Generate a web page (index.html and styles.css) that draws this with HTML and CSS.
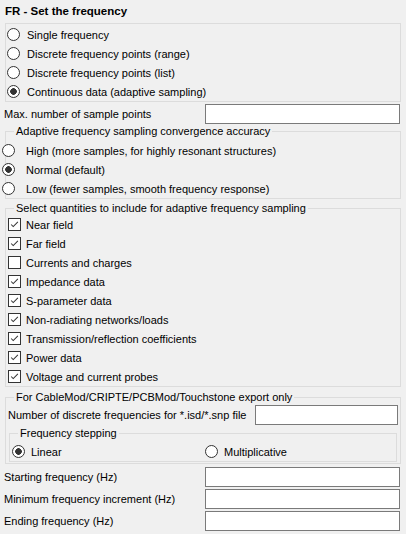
FILE: index.html
```html
<!DOCTYPE html>
<html>
<head>
<meta charset="utf-8">
<title>FR - Set the frequency</title>
<link rel="stylesheet" href="styles.css">
</head>
<body>
<div class="title">FR - Set the frequency</div>

<div class="group first">
  <label class="opt"><span class="radio"></span>Single frequency</label>
  <label class="opt"><span class="radio"></span>Discrete frequency points (range)</label>
  <label class="opt"><span class="radio"></span>Discrete frequency points (list)</label>
  <label class="opt"><span class="radio on"></span>Continuous data (adaptive sampling)</label>
</div>

<div class="field-row">
  <span>Max. number of sample points</span>
  <span class="box"></span>
</div>

<fieldset class="group accuracy">
  <legend>Adaptive frequency sampling convergence accuracy</legend>
  <label class="opt"><span class="radio"></span>High (more samples, for highly resonant structures)</label>
  <label class="opt"><span class="radio on"></span>Normal (default)</label>
  <label class="opt"><span class="radio"></span>Low (fewer samples, smooth frequency response)</label>
</fieldset>

<fieldset class="group quantities">
  <legend>Select quantities to include for adaptive frequency sampling</legend>
  <label class="opt"><span class="check on"><svg viewBox="0 0 13 13"><path d="M2.5 6.5 L5 9 L10.5 3.5" /></svg></span>Near field</label>
  <label class="opt"><span class="check on"><svg viewBox="0 0 13 13"><path d="M2.5 6.5 L5 9 L10.5 3.5" /></svg></span>Far field</label>
  <label class="opt"><span class="check"></span>Currents and charges</label>
  <label class="opt"><span class="check on"><svg viewBox="0 0 13 13"><path d="M2.5 6.5 L5 9 L10.5 3.5" /></svg></span>Impedance data</label>
  <label class="opt"><span class="check on"><svg viewBox="0 0 13 13"><path d="M2.5 6.5 L5 9 L10.5 3.5" /></svg></span>S-parameter data</label>
  <label class="opt"><span class="check on"><svg viewBox="0 0 13 13"><path d="M2.5 6.5 L5 9 L10.5 3.5" /></svg></span>Non-radiating networks/loads</label>
  <label class="opt"><span class="check on"><svg viewBox="0 0 13 13"><path d="M2.5 6.5 L5 9 L10.5 3.5" /></svg></span>Transmission/reflection coefficients</label>
  <label class="opt"><span class="check on"><svg viewBox="0 0 13 13"><path d="M2.5 6.5 L5 9 L10.5 3.5" /></svg></span>Power data</label>
  <label class="opt"><span class="check on"><svg viewBox="0 0 13 13"><path d="M2.5 6.5 L5 9 L10.5 3.5" /></svg></span>Voltage and current probes</label>
</fieldset>

<fieldset class="group export">
  <legend>For CableMod/CRIPTE/PCBMod/Touchstone export only</legend>
  <div class="field-row snp">
    <span>Number of discrete frequencies for *.isd/*.snp file</span>
    <span class="box"></span>
  </div>
  <fieldset class="group stepping">
    <legend>Frequency stepping</legend>
    <div class="two-col">
      <label class="opt"><span class="radio on"></span>Linear</label>
      <label class="opt"><span class="radio"></span>Multiplicative</label>
    </div>
  </fieldset>
</fieldset>

<div class="field-row bottom">
  <span>Starting frequency (Hz)</span>
  <span class="box"></span>
</div>
<div class="field-row">
  <span>Minimum frequency increment (Hz)</span>
  <span class="box"></span>
</div>
<div class="field-row">
  <span>Ending frequency (Hz)</span>
  <span class="box"></span>
</div>
</body>
</html>
```

FILE: styles.css
```css
* {box-sizing: border-box}

body {
 margin: 0;
 width: 406px;
 height: 534px;
 background: #f0f0f0;
 color: #000;
 font-family: "Liberation Sans", Arial, sans-serif;
 font-size: 11px;
 overflow: hidden;
}

.title {
 height: 23px;
 line-height: 23px;
 padding-left: 5px;
 font-weight: bold;
 font-size: 11.5px;
}

.group {
 margin: 0 5px;
 border: 1px solid #dcdcdc;
 padding: 0;
 min-width: 0;
}

fieldset.group legend {
 line-height: 14px;
 padding: 0 2px;
 margin-left: 8px;
}

.first {
 padding-top: 1px;
}

.opt {
 display: flex;
 align-items: center;
 height: 19px;
 white-space: nowrap;
}

.radio, .check {
 flex: none;
 width: 13px;
 height: 13px;
 background: #fff;
 border: 1px solid #333;
}

.radio {
 border-radius: 50%;
 margin: 0 7px 0 1px;
}

.radio.on {
 background: radial-gradient(circle, #333 0, #333 3px, #fff 3.6px);
}

.check {
 margin: 0 5px 0 2px;
}

.check svg {
 display: block;
 width: 11px;
 height: 11px;
}

.check path {
 fill: none;
 stroke: #333;
 stroke-width: 1.2;
}

.field-row {
 display: flex;
 align-items: center;
 justify-content: space-between;
 height: 21px;
 margin-top: 1px;
 padding-left: 4px;
 padding-right: 6px;
 white-space: nowrap;
}

.box {
 flex: none;
 width: 195px;
 height: 20px;
 background: #fff;
 border: 1px solid #7a7a7a;
}

.accuracy {
 padding-top: 3px;
}

.accuracy .radio {
 margin: 0 11px 0 -4px;
}

.quantities {
 margin-top: 2px;
}

.export {
 margin-top: 3px;
 padding-bottom: 1px;
}

.snp {
 margin-top: 0;
 padding-left: 2px;
 padding-right: 2px;
}

.snp .box {
 width: 143px;
}

.stepping {
 margin: 1px 3px 0 3px;
 padding-top: 2px;
}

.two-col {
 display: grid;
 grid-template-columns: 1fr 1fr;
}

.stepping .radio {
 margin: 0 6px 0 2px;
}

.bottom {
 margin-top: 2px;
}
```
